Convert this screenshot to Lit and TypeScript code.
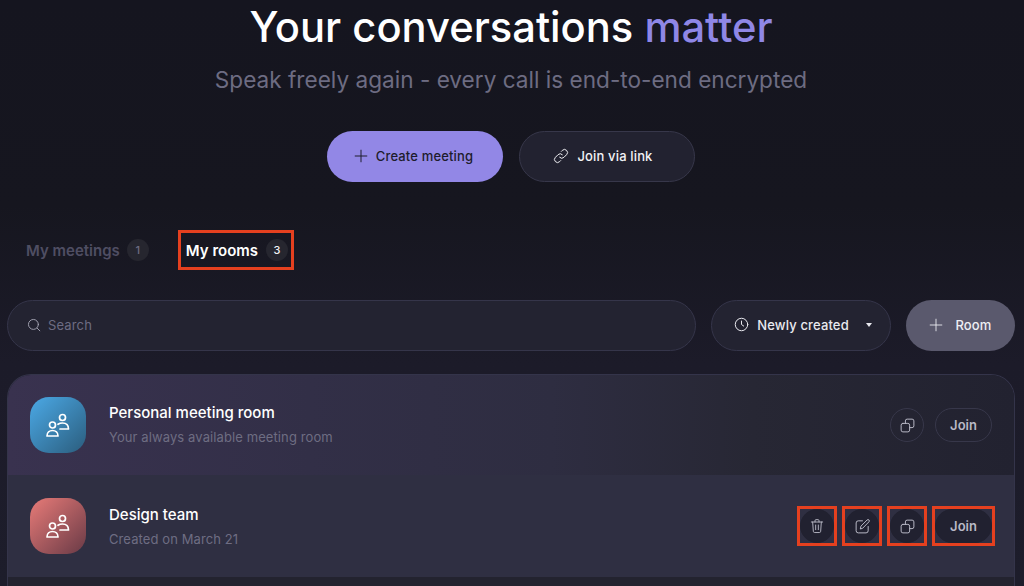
import { LitElement, html, css, svg } from 'lit';
import { customElement } from 'lit/decorators.js';

// shared stroke icons, 24 box
const icon = (body: unknown, size = 16, sw = 1.6) => html`
  <svg width=${size} height=${size} viewBox="0 0 24 24" fill="none" stroke="currentColor"
    stroke-width=${sw} stroke-linecap="round" stroke-linejoin="round">${body}</svg>
`;

const plus = svg`<path d="M12 2v20M2 12h20" />`;
const link = svg`<path d="M10 14a4.500 4.500 0 0 0 6.400 0l4-4a4.500 4.500 0 0 0-6.400-6.400l-1.500 1.500" /><path d="M14 10a4.500 4.500 0 0 0-6.400 0l-4 4a4.500 4.500 0 0 0 6.400 6.400l1.500-1.500" />`;
const search = svg`<circle cx="11" cy="11" r="8.500" /><path d="M17.500 17.500 22 22" />`;
const clock = svg`<circle cx="12" cy="12" r="10" /><path d="M12 6.500V12l3.500 2.500" />`;
const copy = svg`<rect x="3" y="9" width="12" height="12" rx="2.500" /><path d="M9 9V5.500A2.500 2.500 0 0 1 11.500 3h7A2.500 2.500 0 0 1 21 5.500v7a2.500 2.500 0 0 1-2.500 2.500H15" />`;
const trash = svg`<path d="M3.500 6h17M9 6V4a1.500 1.500 0 0 1 1.500-1.500h3A1.500 1.500 0 0 1 15 4v2M5.500 6l1 14a2 2 0 0 0 2 1.800h7a2 2 0 0 0 2-1.800l1-14M10 10.500v7M14 10.500v7" />`;
const edit = svg`<path d="M12 4H6a3 3 0 0 0-3 3v11a3 3 0 0 0 3 3h11a3 3 0 0 0 3-3v-6" /><path d="M9 15l.8-3.500L18.500 2.800a1.800 1.800 0 0 1 2.600 2.600L12.500 14.200z" />`;
const people = svg`
  <circle cx="6.500" cy="12" r="3" /><path d="M1 23c0-3.500 2.500-5.500 5.500-5.500S12 19.500 12 23z" />
  <circle cx="16.500" cy="4.500" r="3" /><path d="M12 11.300c1.200-.8 2.800-1.300 4.500-1.300 3.300 0 6 2 6 6h-8.500" />
`;

@customElement('app-root')
export class AppRoot extends LitElement {
  static styles = css`
    :host {
      display: block;
      height: 586px;
      overflow: hidden;
      font-family: Inter, "Liberation Sans", sans-serif;
      background: linear-gradient(180deg, #15151f 0%, #16161f 35%, #1c1b29 62%, #1d1d2b 100%);
      color: #fff;
    }
    .page {
      display: flex;
      flex-direction: column;
      padding: 0 9px 0 7px;
    }
    .hero {
      display: flex;
      flex-direction: column;
      align-items: center;
    }
    h1 {
      margin: 3px 0 0;
      font-size: 41.7px;
      line-height: 48px;
      font-weight: 500;
    }
    h1 span {
      color: #8f87e6;
    }
    .lead {
      margin: 12px 0 0;
      font-size: 22.6px;
      line-height: 34px;
      color: #6d6c82;
    }
    .cta {
      display: flex;
      gap: 16px;
      margin-top: 34px;
    }
    .btn {
      display: flex;
      align-items: center;
      justify-content: center;
      box-sizing: border-box;
      height: 51px;
      padding-bottom: 2px;
      border-radius: 26px;
      font-size: 13px;
      font-weight: 500;
      letter-spacing: 0.15px;
      gap: 8px;
    }
    .primary {
      width: 176px;
      padding-right: 3px;
      background: #9287e6;
      color: #1d1c2c;
    }
    .ghost {
      width: 176px;
      padding-right: 8px;
      background: #222230;
      border: 1px solid #37374a;
      color: #f2f2f6;
    }
    .tabs {
      display: flex;
      align-items: center;
      gap: 29px;
      margin: 51px 0 0 14px;
    }
    .tab {
      display: flex;
      align-items: center;
      gap: 7px;
      height: 34px;
      padding: 0 3px 0 5px;
      font-size: 15px;
      font-weight: 600;
      color: #4f4e63;
    }
    .tab.on {
      color: #fff;
      gap: 8px;
    }
    .mark {
      display: flex;
      outline: 3px solid #e5401f;
    }
    .count {
      display: flex;
      align-items: center;
      justify-content: center;
      width: 22px;
      height: 22px;
      border-radius: 50%;
      background: #26262f;
      font-size: 11px;
      font-weight: 500;
      color: #6d6c82;
    }
    .tab.on .count {
      color: #f2f2f6;
    }
    .tools {
      display: flex;
      gap: 15px;
      margin-top: 33px;
    }
    .search {
      flex: 1;
      justify-content: flex-start;
      padding-left: 19px;
      gap: 7px;
      background: #232331;
      border: 1px solid #35354a;
      color: #6d6c82;
      font-weight: 400;
    }
    .search svg {
      color: #a5a5b4;
    }
    .sort {
      width: 180px;
      padding-left: 4px;
      background: #232331;
      border: 1px solid #35354a;
      color: #e9e9ef;
    }
    .caret {
      width: 0;
      height: 0;
      margin-left: 9px;
      border-left: 3.500px solid transparent;
      border-right: 3.500px solid transparent;
      border-top: 4px solid #e9e9ef;
    }
    .add {
      width: 109px;
      background: #5a596d;
      color: #eeeef3;
      gap: 12px;
    }
    .list {
      margin-top: 23px;
      border: 1px solid #34344a;
      border-bottom: 0;
      border-radius: 24px 24px 0 0;
      overflow: hidden;
    }
    .row {
      display: flex;
      align-items: center;
      gap: 23px;
      height: 100px;
      padding: 0 22px;
      background: linear-gradient(90deg, #39324f 0%, #322f47 30%, #2e2d41 54%, #272734 74%, #222230 100%);
    }
    .row.hover {
      height: 102px;
      background: #2f2f42;
    }
    .row.next {
      height: 20px;
      background: #23232f;
    }
    .avatar {
      display: flex;
      align-items: center;
      justify-content: center;
      width: 56px;
      height: 56px;
      border-radius: 19px;
      color: #fff;
    }
    .blue {
      background: linear-gradient(135deg, #4ba9e6, #2b5d7d);
    }
    .red {
      background: linear-gradient(135deg, #e87b78, #693a46);
    }
    .info {
      flex: 1;
      padding-bottom: 1px;
    }
    .hover .info {
      padding-top: 1px;
    }
    .name {
      font-size: 15px;
      line-height: 20px;
      font-weight: 500;
    }
    .sub {
      margin-top: 5px;
      font-size: 13px;
      line-height: 18px;
      letter-spacing: 0.1px;
      color: #6e6d82;
    }
    .acts {
      display: flex;
      align-items: center;
      gap: 11px;
    }
    .act {
      display: flex;
      align-items: center;
      justify-content: center;
      box-sizing: border-box;
      width: 34px;
      height: 34px;
      border-radius: 17px;
      color: #b9b9c6;
      font-size: 13px;
      font-weight: 600;
      border: 1px solid #37374a;
    }
    .act.wide {
      width: 57px;
    }
    .hover .act {
      background: #212130;
      border-color: #212130;
    }
  `;

  render() {
    return html`
      <div class="page">
        <div class="hero">
          <h1>Your conversations <span>matter</span></h1>
          <p class="lead">Speak freely again - every call is end-to-end encrypted</p>
          <div class="cta">
            <div class="btn primary">${icon(plus, 14, 1.7)}Create meeting</div>
            <div class="btn ghost">${icon(link, 16, 1.5)}Join via link</div>
          </div>
        </div>

        <div class="tabs">
          <div class="tab">My meetings <span class="count">1</span></div>
          <div class="tab on mark">My rooms <span class="count">3</span></div>
        </div>

        <div class="tools">
          <div class="btn search">${icon(search, 14)}Search</div>
          <div class="btn sort">${icon(clock, 15)}Newly created<span class="caret"></span></div>
          <div class="btn add">${icon(plus, 14, 1.5)}Room</div>
        </div>

        <div class="list">
          <div class="row">
            <div class="avatar blue">${icon(people, 24, 1.7)}</div>
            <div class="info">
              <div class="name">Personal meeting room</div>
              <div class="sub">Your always available meeting room</div>
            </div>
            <div class="acts">
              <div class="act">${icon(copy, 17, 1.4)}</div>
              <div class="act wide">Join</div>
            </div>
          </div>
          <div class="row hover">
            <div class="avatar red">${icon(people, 24, 1.7)}</div>
            <div class="info">
              <div class="name">Design team</div>
              <div class="sub">Created on March 21</div>
            </div>
            <div class="acts">
              <span class="mark"><div class="act">${icon(trash, 16, 1.4)}</div></span>
              <span class="mark"><div class="act">${icon(edit, 17, 1.4)}</div></span>
              <span class="mark"><div class="act">${icon(copy, 17, 1.4)}</div></span>
              <span class="mark"><div class="act wide">Join</div></span>
            </div>
          </div>
          <div class="row next"></div>
        </div>
      </div>
    `;
  }
}
